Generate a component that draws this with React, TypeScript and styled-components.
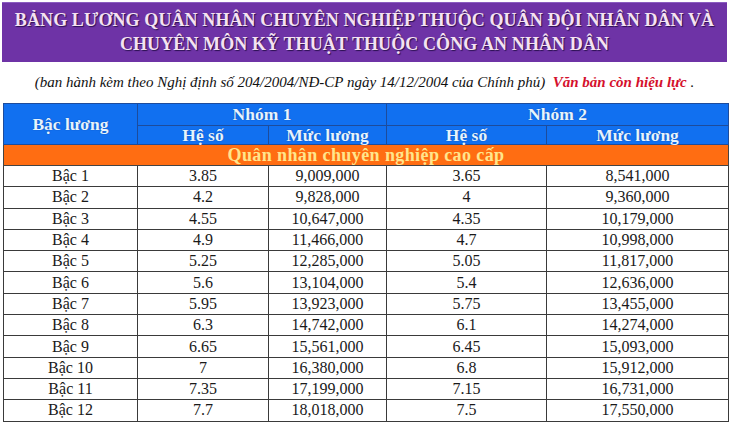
import React from "react";
import styled, { createGlobalStyle } from "styled-components";

const serif = `"Liberation Serif", "DejaVu Serif", serif`;

const Global = createGlobalStyle`
  html, body { margin: 0; padding: 0; background: #ffffff; }
  body { width: 730px; height: 426px; overflow: hidden; font-family: ${serif}; }
`;

const Page = styled.div`
  display: flex;
  flex-direction: column;
  padding: 2px 3px 0 2px;
  font-family: ${serif};
`;

const Banner = styled.div`
  background: #6e33a6;
  border-top: 1px solid #8a5cc0;
  height: 59px;
  display: flex;
  flex-direction: column;
  align-items: center;
  justify-content: center;
  gap: 1px;
`;

const TitleLine = styled.div`
  color: #f5e2f2;
  font-family: ${serif};
  font-weight: bold;
  font-size: 18px;
  line-height: 23px;
  letter-spacing: 0.1px;
  text-shadow: 1px 1px 1px #2a1050;
  white-space: nowrap;
`;

const Subtitle = styled.div`
  height: 42px;
  display: flex;
  align-items: center;
  justify-content: center;
  font-family: ${serif};
  font-style: italic;
  font-size: 15px;
  color: #111;
  white-space: pre;
  margin-top: -1px;
`;

const Valid = styled.span`
  color: #d4102c;
  font-weight: bold;
`;

const Table = styled.table`
  border-collapse: collapse;
  table-layout: fixed;
  width: 725px;
  margin-left: 1px;
  font-family: ${serif};
`;

const HeadCell = styled.th<{ $h: number }>`
  background: #1170f0;
  color: #e6f4ff;
  font-family: ${serif};
  font-weight: bold;
  font-size: 17.5px;
  line-height: 17px;
  height: ${(p) => p.$h}px;
  padding: 0;
  border: 1px solid #1d4c9c;
  text-align: center;
  text-shadow: 0 0 1px #0a3a90;
`;

const SectionCell = styled.td`
  background: #ff6d12;
  color: #ffe58c;
  font-family: ${serif};
  font-weight: bold;
  font-size: 18px;
  line-height: 19px;
  height: 20px;
  padding: 0;
  text-align: center;
  border: 1px solid #444;
  letter-spacing: 0.4px;
`;

const Cell = styled.td`
  height: 20.3px;
  padding: 0;
  font-family: ${serif};
  font-size: 16px;
  color: #1a1a1a;
  text-align: center;
  border: 1px solid #3a3a3a;
  line-height: 20px;
`;

const rows: [string, string, string, string, string][] = [
  ["Bậc 1", "3.85", "9,009,000", "3.65", "8,541,000"],
  ["Bậc 2", "4.2", "9,828,000", "4", "9,360,000"],
  ["Bậc 3", "4.55", "10,647,000", "4.35", "10,179,000"],
  ["Bậc 4", "4.9", "11,466,000", "4.7", "10,998,000"],
  ["Bậc 5", "5.25", "12,285,000", "5.05", "11,817,000"],
  ["Bậc 6", "5.6", "13,104,000", "5.4", "12,636,000"],
  ["Bậc 7", "5.95", "13,923,000", "5.75", "13,455,000"],
  ["Bậc 8", "6.3", "14,742,000", "6.1", "14,274,000"],
  ["Bậc 9", "6.65", "15,561,000", "6.45", "15,093,000"],
  ["Bậc 10", "7", "16,380,000", "6.8", "15,912,000"],
  ["Bậc 11", "7.35", "17,199,000", "7.15", "16,731,000"],
  ["Bậc 12", "7.7", "18,018,000", "7.5", "17,550,000"],
];

export default function App() {
  return (
    <>
      <Global />
      <Page>
        <Banner>
          <TitleLine>BẢNG LƯƠNG QUÂN NHÂN CHUYÊN NGHIỆP THUỘC QUÂN ĐỘI NHÂN DÂN VÀ</TitleLine>
          <TitleLine>CHUYÊN MÔN KỸ THUẬT THUỘC CÔNG AN NHÂN DÂN</TitleLine>
        </Banner>
        <Subtitle>
          {"(ban hành kèm theo Nghị định số 204/2004/NĐ-CP ngày 14/12/2004 của Chính phủ)  "}
          <Valid>Văn bản còn hiệu lực</Valid>
          {" ."}
        </Subtitle>
        <Table>
          <colgroup>
            <col style={{ width: 134 }} />
            <col style={{ width: 131 }} />
            <col style={{ width: 118 }} />
            <col style={{ width: 160 }} />
            <col style={{ width: 182 }} />
          </colgroup>
          <thead>
            <tr>
              <HeadCell $h={21} rowSpan={2}>Bậc lương</HeadCell>
              <HeadCell $h={21} colSpan={2}>Nhóm 1</HeadCell>
              <HeadCell $h={21} colSpan={2}>Nhóm 2</HeadCell>
            </tr>
            <tr>
              <HeadCell $h={18}>Hệ số</HeadCell>
              <HeadCell $h={18}>Mức lương</HeadCell>
              <HeadCell $h={18}>Hệ số</HeadCell>
              <HeadCell $h={18}>Mức lương</HeadCell>
            </tr>
          </thead>
          <tbody>
            <tr>
              <SectionCell colSpan={5}>Quân nhân chuyên nghiệp cao cấp</SectionCell>
            </tr>
            {rows.map((r) => (
              <tr key={r[0]}>
                {r.map((v, i) => (
                  <Cell key={i}>{v}</Cell>
                ))}
              </tr>
            ))}
          </tbody>
        </Table>
      </Page>
    </>
  );
}
